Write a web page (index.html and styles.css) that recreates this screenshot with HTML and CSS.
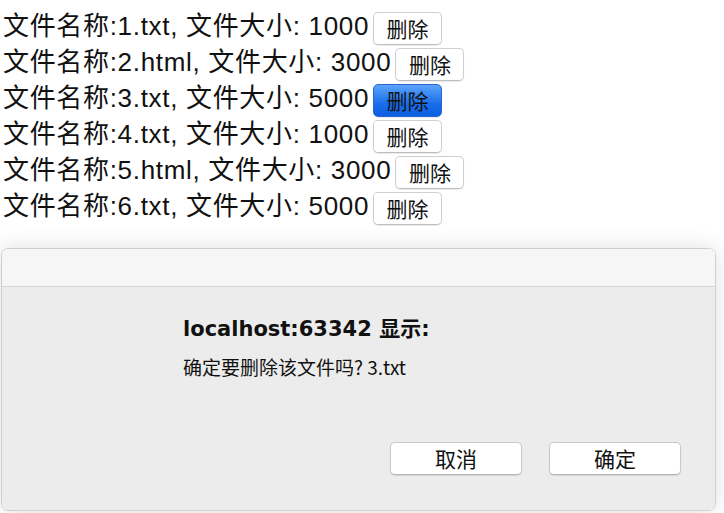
FILE: index.html
```html
<!DOCTYPE html>
<html lang="zh">
<head>
<meta charset="utf-8">
<title>文件列表</title>
<link rel="stylesheet" href="styles.css">
</head>
<body>
<div class="files">
  <div class="row"><span class="name">文件名称:1.txt, 文件大小: 1000</span><button class="del">删除</button></div>
  <div class="row"><span class="name">文件名称:2.html, 文件大小: 3000</span><button class="del">删除</button></div>
  <div class="row"><span class="name">文件名称:3.txt, 文件大小: 5000</span><button class="del active">删除</button></div>
  <div class="row"><span class="name">文件名称:4.txt, 文件大小: 1000</span><button class="del">删除</button></div>
  <div class="row"><span class="name">文件名称:5.html, 文件大小: 3000</span><button class="del">删除</button></div>
  <div class="row"><span class="name">文件名称:6.txt, 文件大小: 5000</span><button class="del">删除</button></div>
</div>
<div class="dialog">
  <div class="dialog-head"></div>
  <div class="dialog-body">
    <div class="title">localhost:63342 显示:</div>
    <div class="msg">确定要删除该文件吗? 3.txt</div>
    <div class="actions">
      <button class="dbtn">取消</button>
      <button class="dbtn">确定</button>
    </div>
  </div>
</div>
</body>
</html>
```

FILE: styles.css
```css
html, body {
  margin: 0;
  padding: 0;
  background: #ffffff;
}
body {
  width: 724px;
  height: 513px;
  overflow: hidden;
}
.files {
  padding: 10px 0 0 3px;
  font-family: "Liberation Sans", "Noto Sans CJK SC", sans-serif;
  font-size: 26px;
  letter-spacing: 0.68px;
  color: #111;
}
.row {
  height: 36px;
  display: flex;
  align-items: center;
}
.name {
  white-space: pre;
  line-height: 36px;
  margin-top: -4px;
}
.del {
  margin-left: 4px;
  width: 69px;
  height: 33px;
  padding: 0;
  font-family: "Noto Sans CJK SC", sans-serif;
  font-size: 21px;
  letter-spacing: 0;
  color: #111;
  background: #ffffff;
  border: 1px solid #cfcfcf;
  border-bottom-color: #bdbdbd;
  border-radius: 5px;
  box-shadow: 0 1px 1px rgba(0,0,0,0.08);
  line-height: 31px;
}
.del.active {
  background: linear-gradient(#5ba4fb, #1a6eea 60%, #0b5fe2);
  border-color: #2a66d0;
}
.dialog {
  margin: 22px 0 0 1px;
  width: 715px;
  height: 263px;
  border: 1px solid #cfcfcf;
  border-radius: 7px;
  overflow: hidden;
  box-shadow: 0 0 22px rgba(0,0,0,0.13);
  display: flex;
  flex-direction: column;
  box-sizing: border-box;
}
.dialog-head {
  height: 37px;
  background: #f6f6f6;
  border-bottom: 1px solid #d5d5d5;
  flex: none;
}
.dialog-body {
  flex: 1;
  background: #ececec;
  display: flex;
  flex-direction: column;
  padding: 30px 34px 35px 181px;
  font-family: "DejaVu Sans", "Noto Sans CJK SC", sans-serif;
  color: #111;
}
.title {
  font-weight: bold;
  font-size: 21px;
  line-height: 25px;
}
.msg {
  margin-top: 13px;
  font-size: 19px;
  line-height: 24px;
  font-family: "Noto Sans CJK SC", "DejaVu Sans", sans-serif;
}
.actions {
  margin-top: auto;
  display: flex;
  justify-content: flex-end;
  gap: 27px;
}
.dbtn {
  width: 132px;
  height: 33px;
  padding: 0;
  font-family: "Noto Sans CJK SC", sans-serif;
  font-size: 21px;
  color: #111;
  background: #ffffff;
  border: 1px solid #c8c8c8;
  border-bottom-color: #b5b5b5;
  border-radius: 5px;
  box-shadow: 0 1px 1px rgba(0,0,0,0.1);
  line-height: 31px;
}
```
